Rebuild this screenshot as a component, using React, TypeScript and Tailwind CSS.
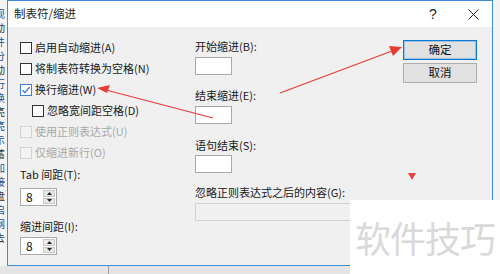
import React from "react";

const stripChars = ["现", "动", "件", "分", "动", "行", "换", "亮", "亮", "示", "蓄", "加", "接", "盘", "启", "网", "去"];

function Check({ checked, disabled, label }: { checked?: boolean; disabled?: boolean; label: string }) {
  return (
    <div className="flex h-[21px] items-center gap-[3px]">
      <span
        className={
          "flex h-[12px] w-[12px] items-center justify-center border " +
          (disabled ? "border-[#d4d4d4] bg-[#f3f3f3]" : checked ? "border-[#3c7fd6] bg-white" : "border-[#333] bg-white")
        }
      >
        {checked && (
          <svg width="10" height="10" viewBox="0 0 10 10">
            <path d="M1.5 5.2 L4 7.6 L8.6 2.2" fill="none" stroke="#2a6fd0" strokeWidth="1.3" />
          </svg>
        )}
      </span>
      <span className={disabled ? "text-[#a8a8a8]" : "text-[#1a1a1a]"}>{label}</span>
    </div>
  );
}

function Spinner() {
  return (
    <div className="flex h-[18px] w-[37px] border border-[#a9a9a9] bg-white">
      <div className="flex flex-1 items-center pl-[5px] text-[12px] text-[#111]">8</div>
      <div className="flex w-[14px] flex-col gap-px bg-white p-px">
        <div className="flex flex-1 items-center justify-center border border-[#c8c8c8] bg-[#e8e8e8]">
          <svg width="5" height="3" viewBox="0 0 5 3">
            <path d="M0 3 L2.5 0 L5 3 Z" fill="#222" />
          </svg>
        </div>
        <div className="flex flex-1 items-center justify-center border border-[#c8c8c8] bg-[#e8e8e8]">
          <svg width="5" height="3" viewBox="0 0 5 3">
            <path d="M0 0 L2.5 3 L5 0 Z" fill="#222" />
          </svg>
        </div>
      </div>
    </div>
  );
}

function Label({ text, className = "" }: { text: string; className?: string }) {
  return <div className={"flex h-[18px] items-center text-[#1a1a1a] " + className}>{text}</div>;
}

function Box({ className = "" }: { className?: string }) {
  return <div className={"h-[18px] w-[37px] border border-[#a9a9a9] bg-white " + className} />;
}

export default function App() {
  return (
    <div
      className="relative h-[274px] w-[500px] overflow-hidden bg-[#ececec] text-[11px] leading-none"
      style={{ fontFamily: '"Noto Sans CJK SC", "Noto Sans", sans-serif' }}
    >
      <div className="flex h-[266px]">
        {/* background window strip */}
        <div className="w-[7px] overflow-hidden bg-[#f4f4f4] pt-[7px]">
          <div className="-ml-[5px] flex flex-col text-[10px] leading-[14px] text-[#2b4f8c]">
            {stripChars.map((c, i) => (
              <span key={i} className={"block h-[14px] " + (i % 3 === 1 ? "text-[#333]" : "")}>
                {c}
              </span>
            ))}
          </div>
        </div>

        {/* dialog */}
        <div className="flex w-[486px] flex-col border border-[#3f8fd8] bg-[#f0f0f0]">
          <div className="flex h-[26px] items-center bg-white pl-[6px]">
            <span className="text-[11.5px] text-[#222]">制表符/缩进</span>
            <span className="ml-auto w-[20px] text-center text-[14px] text-[#222]" style={{ fontFamily: '"Liberation Sans", sans-serif' }}>?</span>
            <span className="ml-[20px] mr-[9px] flex w-[20px] justify-center">
              <svg width="11" height="11" viewBox="0 0 11 11">
                <path d="M0.5 0.5 L10.5 10.5 M10.5 0.5 L0.5 10.5" stroke="#222" strokeWidth="1" />
              </svg>
            </span>
          </div>

          <div className="flex flex-1 pl-[12px] pt-[10px]">
            {/* left column */}
            <div className="flex w-[175px] flex-col">
              <Check label="启用自动缩进(A)" />
              <Check label="将制表符转换为空格(N)" />
              <Check checked label="换行缩进(W)" />
              <div className="pl-[12px]">
                <Check label="忽略宽间距空格(D)" />
              </div>
              <Check disabled label="使用正则表达式(U)" />
              <Check disabled label="仅缩进新行(O)" />
              <div className="flex h-[22px] items-center text-[#1a1a1a]">Tab 间距(T):</div>
              <div className="mt-[3px]">
                <Spinner />
              </div>
              <div className="mt-[10px] flex h-[20px] items-center text-[#1a1a1a]">缩进间距(I):</div>
              <div className="mt-px">
                <Spinner />
              </div>
            </div>

            {/* right section */}
            <div className="flex flex-1 flex-col">
              <div className="flex">
                <div className="flex w-[208px] flex-col">
                  <Label text="开始缩进(B):" />
                  <Box className="mt-[2px]" />
                  <Label text="结束缩进(E):" className="mt-[11px]" />
                  <Box className="mt-[2px]" />
                  <Label text="语句结束(S):" className="mt-[12px]" />
                  <Box className="mt-px" />
                </div>
                <div className="mt-[3px] flex w-[74px] flex-col gap-[3px]">
                  <button className="h-[20px] border border-[#0a78d7] bg-[#e1e1e1] text-[11.5px] text-[#111] outline outline-1 -outline-offset-2 outline-[#0a78d7]/30">
                    确定
                  </button>
                  <button className="h-[20px] border border-[#adadad] bg-[#e1e1e1] text-[11.5px] text-[#111]">取消</button>
                </div>
              </div>
              <Label text="忽略正则表达式之后的内容(G):" className="mt-[10px]" />
              <div className="mt-[2px] h-[18px] w-[283px] border border-[#d2d2d2] bg-[#f0f0f0]" />
            </div>
          </div>
        </div>

        <div className="flex-1 bg-[#f4f4f4]" />
      </div>

      {/* window below */}
      <div className="flex h-[8px] bg-[#e4e4e4]">
        <div className="ml-[108px] w-px bg-[#a0a0a0]" />
      </div>

      {/* annotations */}
      <svg className="pointer-events-none absolute left-0 top-0" width="500" height="274" viewBox="0 0 500 274">
        <line x1="213" y1="118" x2="106" y2="90" stroke="#e53d36" strokeWidth="1.2" />
        <path d="M97 88 L110 85 L107 93 Z" fill="#e53d36" />
        <line x1="280" y1="93" x2="392" y2="51" stroke="#e53d36" strokeWidth="1.3" />
        <path d="M402 47 L389 46 L393 56 Z" fill="#e53d36" />
        <path d="M408 173 L416 173 L412 180 Z" fill="#e8433c" />
      </svg>

      {/* watermark */}
      <div className="absolute left-[350px] top-[200px] flex h-[74px] w-[150px] items-center bg-white pl-[5px]">
        <span className="text-[36px] leading-none tracking-[-1px] text-[#d9d9d9]">软件技巧</span>
      </div>
    </div>
  );
}
